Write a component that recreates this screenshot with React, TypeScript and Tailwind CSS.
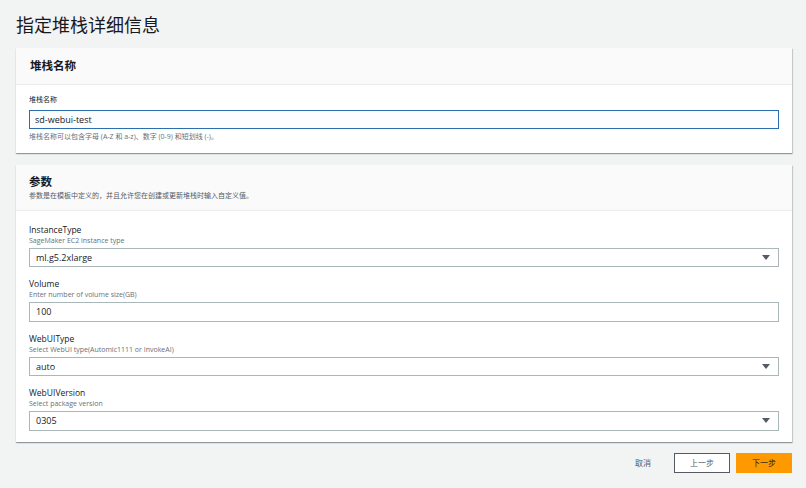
import React from "react";

const font = { fontFamily: '"Open Sans", "Noto Sans CJK SC", sans-serif' };

function Caret() {
  return (
    <svg width="8" height="5" viewBox="0 0 8 5" className="shrink-0">
      <path d="M0 0 L8 0 L4 5 Z" fill="#545b64" />
    </svg>
  );
}

function Field({
  label,
  desc,
  value,
  select,
}: {
  label: string;
  desc: string;
  value: string;
  select?: boolean;
}) {
  return (
    <div className="flex flex-col">
      <div className="text-[8.5px] leading-[12px] text-[#16191f]">{label}</div>
      <div className="text-[7px] leading-[10px] text-[#687078]">{desc}</div>
      <div className="mt-[2px] h-[19.5px] border border-[#aab7b8] bg-white flex items-center justify-between pl-[6px] pr-[8px]">
        <span className="text-[9px] text-[#16191f]">{value}</span>
        {select && <Caret />}
      </div>
    </div>
  );
}

export default function App() {
  return (
    <div
      className="w-[806px] h-[488px] bg-[#f2f3f3] pl-[16px] pr-[14px] overflow-hidden"
      style={font}
    >
      <div className="h-[48px] pt-[13px]">
        <h1 className="text-[18px] leading-[24px] text-[#16191f] font-normal">指定堆栈详细信息</h1>
      </div>

      <div className="bg-white shadow-[0_1px_1px_0_rgba(0,28,36,0.3),1px_1px_1px_0_rgba(0,28,36,0.15)]">
        <div className="h-[37px] bg-[#fafafa] border-b border-[#eaeded] flex items-center px-[14px]">
          <span className="text-[11.5px] font-bold text-[#16191f]">堆栈名称</span>
        </div>
        <div className="px-[13px] pt-[10px] pb-[11px]">
          <div className="text-[7px] leading-[10px] text-[#16191f]">堆栈名称</div>
          <div className="mt-[5px] h-[18.5px] border-[1.5px] border-[#2a6eb0] bg-[#fbfdff] flex items-center pl-[5px]">
            <span className="text-[9px] text-[#16191f]">sd-webui-test</span>
          </div>
          <div className="mt-[3px] text-[7px] leading-[10px] text-[#687078]">
            堆栈名称可以包含字母 (A-Z 和 a-z)、数字 (0-9) 和短划线 (-)。
          </div>
        </div>
      </div>

      <div className="mt-[12px] bg-white shadow-[0_1px_1px_0_rgba(0,28,36,0.3),1px_1px_1px_0_rgba(0,28,36,0.15)]">
        <div className="h-[46px] bg-[#fafafa] border-b border-[#eaeded] px-[13px] pt-[9px]">
          <div className="text-[11.5px] leading-[15px] font-bold text-[#16191f]">参数</div>
          <div className="text-[7px] leading-[13px] text-[#545b64]">
            参数是在模板中定义的，并且允许您在创建或更新堆栈时输入自定义值。
          </div>
        </div>
        <div className="px-[13px] pt-[13px] pb-[11px] flex flex-col gap-[11px]">
          <Field label="InstanceType" desc="SageMaker EC2 instance type" value="ml.g5.2xlarge" select />
          <Field label="Volume" desc="Enter number of volume size(GB)" value="100" />
          <Field label="WebUIType" desc="Select WebUI type(Automic1111 or InvokeAI)" value="auto" select />
          <Field label="WebUIVersion" desc="Select package version" value="0305" select />
        </div>
      </div>

      <div className="mt-[11px] flex items-center justify-end gap-[6px]">
        <button className="h-[19px] px-[17px] text-[8px] text-[#545b64]">取消</button>
        <button className="w-[56px] h-[20px] border border-[#545b64] bg-white text-[8px] text-[#545b64]">上一步</button>
        <button className="w-[56px] h-[20px] bg-[#ff9900] text-[8px] text-[#16191f]">下一步</button>
      </div>
    </div>
  );
}
